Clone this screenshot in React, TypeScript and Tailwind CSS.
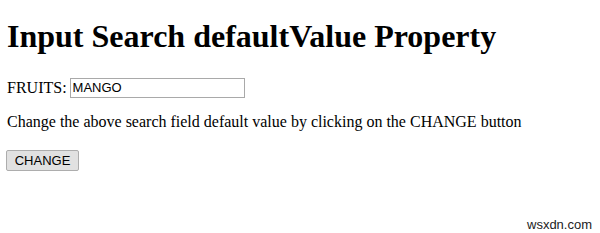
export default function App() {
  return (
    <div className="relative h-[233px] w-[600px] overflow-hidden bg-white px-[7px] font-['Liberation_Serif',serif] text-[16px] text-black">
      <h1 className="mt-[18px] mb-[23px] text-[32px] font-bold leading-[37px]">Input Search defaultValue Property</h1>
      <div className="flex items-center leading-[20px]">
        <span>FRUITS:</span>
        <input
          type="search"
          defaultValue="MANGO"
          className="ml-[3px] h-[20px] w-[175px] border border-[#a9a9a9] px-[2px] font-['Liberation_Sans',sans-serif] text-[13px] text-black outline-none"
        />
      </div>
      <p className="mt-[15px] leading-[18px]">Change the above search field default value by clicking on the CHANGE button</p>
      <div className="mt-[17px] -ml-px">
        <button className="h-[21px] w-[73px] rounded-[2px] border border-[#adadad] bg-[#e1e1e1] font-['Liberation_Sans',sans-serif] text-[13px] leading-[19px] text-black">
          CHANGE
        </button>
      </div>
      <span className="absolute left-[527px] top-[215px] font-['Liberation_Sans',sans-serif] text-[13px] text-[#222]">wsxdn.com</span>
    </div>
  );
}
